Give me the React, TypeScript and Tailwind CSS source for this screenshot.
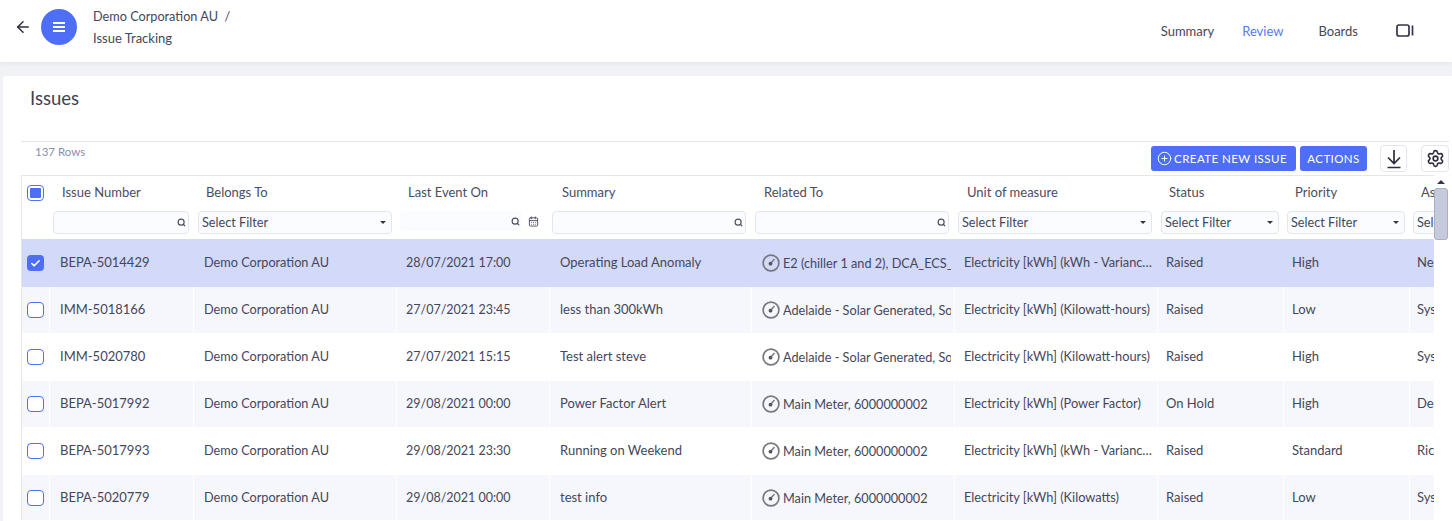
import { ArrowLeft, Search, CalendarDays, Settings, CirclePlus, Check } from "lucide-react";

const grid = "grid grid-cols-[28px_144px_203px_153px_202px_203px_203px_126px_126px_200px]";

const headers: [string, string][] = [
  ["Issue Number", "pl-3"],
  ["Belongs To", "pl-3"],
  ["Last Event On", "pl-[11px]"],
  ["Summary", "pl-3"],
  ["Related To", "pl-3"],
  ["Unit of measure", "pl-3"],
  ["Status", "pl-[11px]"],
  ["Priority", "pl-[11px]"],
  ["Assigned To", "pl-[11px]"],
];

type Row = { id: string; at: string; sum: string; rel: string; unit: string; st: string; pr: string; who: string };

const rows: Row[] = [
  { id: "BEPA-5014429", at: "28/07/2021 17:00", sum: "Operating Load Anomaly", rel: "E2 (chiller 1 and 2), DCA_ECS_Main", unit: "Electricity [kWh] (kWh - Variance from Baseline)", st: "Raised", pr: "High", who: "Nelson" },
  { id: "IMM-5018166", at: "27/07/2021 23:45", sum: "less than 300kWh", rel: "Adelaide - Solar Generated, Solar", unit: "Electricity [kWh] (Kilowatt-hours)", st: "Raised", pr: "Low", who: "System" },
  { id: "IMM-5020780", at: "27/07/2021 15:15", sum: "Test alert steve", rel: "Adelaide - Solar Generated, Solar", unit: "Electricity [kWh] (Kilowatt-hours)", st: "Raised", pr: "High", who: "System" },
  { id: "BEPA-5017992", at: "29/08/2021 00:00", sum: "Power Factor Alert", rel: "Main Meter, 6000000002", unit: "Electricity [kWh] (Power Factor)", st: "On Hold", pr: "High", who: "Demo" },
  { id: "BEPA-5017993", at: "29/08/2021 23:30", sum: "Running on Weekend", rel: "Main Meter, 6000000002", unit: "Electricity [kWh] (kWh - Variance from Baseline)", st: "Raised", pr: "Standard", who: "Richard" },
  { id: "BEPA-5020779", at: "29/08/2021 00:00", sum: "test info", rel: "Main Meter, 6000000002", unit: "Electricity [kWh] (Kilowatts)", st: "Raised", pr: "Low", who: "System" },
];

function Gauge() {
  return (
    <svg width="18" height="18" viewBox="0 0 18 18" fill="none" className="shrink-0">
      <circle cx="9" cy="9" r="7.9" stroke="#77787e" strokeWidth="1.7" />
      <path d="M8.5 9.5 L12.5 5" stroke="#77787e" strokeWidth="1.4" />
      <circle cx="8.5" cy="9.7" r="1.9" fill="#55565c" />
    </svg>
  );
}

function TextFilter() {
  return (
    <div className="h-[23px] flex items-center justify-end pr-[2px] rounded-[4px] border border-[#e3e6f0] bg-[#fbfcff]">
      <Search size={9} strokeWidth={3} className="text-[#4a4e5e]" />
    </div>
  );
}

function SelectFilter() {
  return (
    <div className="h-[23px] flex items-center justify-between pl-[3px] pr-[5px] rounded-[4px] border border-[#e3e6f0] bg-[#fbfcff] text-[12.7px] text-[#44475a] overflow-hidden whitespace-nowrap">
      <span>Select Filter</span>
      <span className="w-0 h-0 border-x-[3.5px] border-x-transparent border-t-[3.5px] border-t-[#33354a] shrink-0" />
    </div>
  );
}

function Box({ state }: { state: "none" | "all" | "on" }) {
  if (state === "on") {
    return (
      <span className="w-[17px] h-[16px] rounded-[4px] bg-[#4f6ef7] flex items-center justify-center">
        <Check size={11} strokeWidth={3.5} className="text-white" />
      </span>
    );
  }
  return (
    <span className="w-[17px] h-[16px] rounded-[4px] border border-[#4f6ef7] bg-white flex items-center justify-center">
      {state === "all" && <span className="w-[11px] h-[10px] bg-[#4f6ef7] rounded-[1px]" />}
    </span>
  );
}

export default function App() {
  return (
    <div className="h-[521px] w-[1452px] overflow-hidden bg-[#f1f2f6] font-[family-name:Lato,sans-serif] text-[#3f4254]">
      <header className="h-[62px] bg-white shadow-[0_1px_5px_rgba(0,0,0,0.07)] flex justify-between relative">
        <div className="flex items-start pt-[9px] pl-[14px]">
          <ArrowLeft size={18} strokeWidth={2} className="mt-[9px] text-[#2c2e3e]" />
          <span className="ml-[9px] w-9 h-9 rounded-full bg-[#4f6ef7] flex flex-col items-center justify-center gap-[2.5px]">
            <span className="w-[12px] h-[1.5px] bg-white" />
            <span className="w-[12px] h-[1.5px] bg-white" />
            <span className="w-[12px] h-[1.5px] bg-white" />
          </span>
          <div className="ml-4 -mt-[4px] text-[13px] leading-[22px] text-[#44475a]">
            <div className="text-[12.7px]">Demo Corporation AU &nbsp;/</div>
            <div>Issue Tracking</div>
          </div>
        </div>
        <nav className="flex items-start pt-[22px] text-[13px] leading-[18px] pr-[38px]">
          <span className="text-[#44475a]">Summary</span>
          <span className="ml-[28px] text-[#5b78f6]">Review</span>
          <span className="ml-[35px] text-[#44475a]">Boards</span>
          <svg width="18" height="14" viewBox="0 0 18 14" fill="none" className="ml-[38px] mt-[2px]">
            <rect x="1" y="1" width="12" height="11" rx="2" stroke="#33354a" strokeWidth="1.7" />
            <path d="M16.5 1.5 V11.5" stroke="#33354a" strokeWidth="1.7" />
          </svg>
        </nav>
      </header>

      <main className="mt-[14px] ml-[3px] bg-white h-[445px] rounded-tl-[3px] pl-[18px] pr-[3px]">
        <h1 className="pt-[11px] pl-[9px] text-[18.5px] leading-[22px] text-[#3f4254] h-[65px]">Issues</h1>
        <div className="border-t border-[#e3e5f0] h-[34px] flex items-start justify-between">
          <span className="pl-[14px] pt-[2px] text-[11.5px] leading-[15px] text-[#8590ae]">137 Rows</span>
          <div className="flex items-start pt-[3px]">
            <button className="h-[25px] w-[145px] mt-[1px] rounded-[3px] bg-[#4f6ef7] text-white text-[11.5px] tracking-[0.45px] flex items-center justify-start pl-[6px] gap-[2px]">
              <CirclePlus size={15} strokeWidth={1.6} />
              CREATE NEW ISSUE
            </button>
            <button className="h-[25px] w-[67px] mt-[1px] ml-[4px] rounded-[3px] bg-[#4f6ef7] text-white text-[11.5px] tracking-[0.4px]">ACTIONS</button>
            <span className="ml-[13px] w-[27px] h-[27px] rounded-[4px] border border-[#e3e6f0] flex items-center justify-center">
              <svg width="16" height="20" viewBox="0 0 16 20" fill="none" stroke="#2c2e3e" strokeWidth="1.7">
                <path d="M8 1 V14 M2 8.5 L8 14.5 L14 8.5 M1.5 18.5 H14.5" />
              </svg>
            </span>
            <span className="ml-[14px] w-[28px] h-[27px] rounded-[4px] border border-[#e3e6f0] flex items-center justify-center text-[#2c2e3e]">
              <Settings size={19} strokeWidth={2} />
            </span>
          </div>
        </div>

        <div className="flex">
          <div className="w-[1413px] overflow-hidden border-l border-t border-[#e3e5f0] h-[345px]">
            <div className={`${grid} h-[31px] items-center text-[13px] text-[#4a4d60] whitespace-nowrap pt-[2px]`}>
              <span className="pl-[5px]"><Box state="all" /></span>
              {headers.map(([h, p]) => (
                <span key={h} className={p}>{h}</span>
              ))}
            </div>
            <div className={`${grid} h-[32px] items-start pt-[4px]`}>
              <span />
              <div className="pl-[3px] pr-[5px]"><TextFilter /></div>
              <div className="pl-[4px] pr-[5px]"><SelectFilter /></div>
              <div className="pl-[3px] pr-[2px] flex items-start">
                <div className="flex-1 h-[20px] rounded-[4px] bg-[#fbfcff] flex items-center justify-end pr-[2px]">
                  <Search size={9} strokeWidth={3} className="text-[#4a4e5e]" />
                </div>
                <CalendarDays size={11} strokeWidth={2} className="ml-[6px] mt-[5px] text-[#4a4e5e]" />
                <span className="w-[9px]" />
              </div>
              <div className="pl-[2px] pr-[6px]"><TextFilter /></div>
              <div className="pl-[3px] pr-[6px]"><TextFilter /></div>
              <div className="pl-[3px] pr-[6px]"><SelectFilter /></div>
              <div className="pl-[3px] pr-[5px]"><SelectFilter /></div>
              <div className="pl-[3px] pr-[5px]"><SelectFilter /></div>
              <div className="pl-[3px] pr-[5px]"><SelectFilter /></div>
            </div>
            {rows.map((r, i) => {
              const rowBg = i === 0 ? "bg-[#d3d9f9]" : i === 2 || i === 4 ? "bg-white" : "bg-[#f6f7fd]";
              const h = i % 2 === 0 ? "h-[48px]" : "h-[46px]";
              const line = i === 0 ? "border-r border-transparent" : "border-r border-white";
              const cell = `${line} flex items-center overflow-hidden whitespace-nowrap`;
              return (
                <div key={r.id} className={`${grid} ${h} ${rowBg} text-[13px] text-[#44475a]`}>
                  <span className={`${cell} pl-[5px]`}><Box state={i === 0 ? "on" : "none"} /></span>
                  <span className={`${cell} pl-[10px]`}>{r.id}</span>
                  <span className={`${cell} pl-[10px] text-[12.7px]`}>Demo Corporation AU</span>
                  <span className={`${cell} pl-[9px] text-[12.5px]`}>{r.at}</span>
                  <span className={`${cell} pl-[10px]`}>{r.sum}</span>
                  <span className={`${cell} pl-[10px] pr-[3px] text-[12.7px]`}>
                    <Gauge />
                    <span className="ml-[3px] mt-[2px] overflow-hidden">{r.rel}</span>
                  </span>
                  <span className={`${cell} pl-[9px] text-[12.8px]`}>
                    <span className="block max-w-[191px] truncate">{r.unit}</span>
                  </span>
                  <span className={`${cell} pl-[8px]`}>{r.st}</span>
                  <span className={`${cell} pl-[8px]`}>{r.pr}</span>
                  <span className="flex items-center pl-[7px] whitespace-nowrap">{r.who}</span>
                </div>
              );
            })}
          </div>
          <div className="w-[14px] h-[345px] flex flex-col items-stretch">
            <span className="mt-[5px] mx-auto w-0 h-0 border-x-[4px] border-x-transparent border-b-[4px] border-b-[#33354a]" />
            <span className="mt-[4px] h-[52px] rounded-[3px] bg-[#c5cadd] border border-[#a9afc4]" />
          </div>
        </div>
      </main>
    </div>
  );
}
